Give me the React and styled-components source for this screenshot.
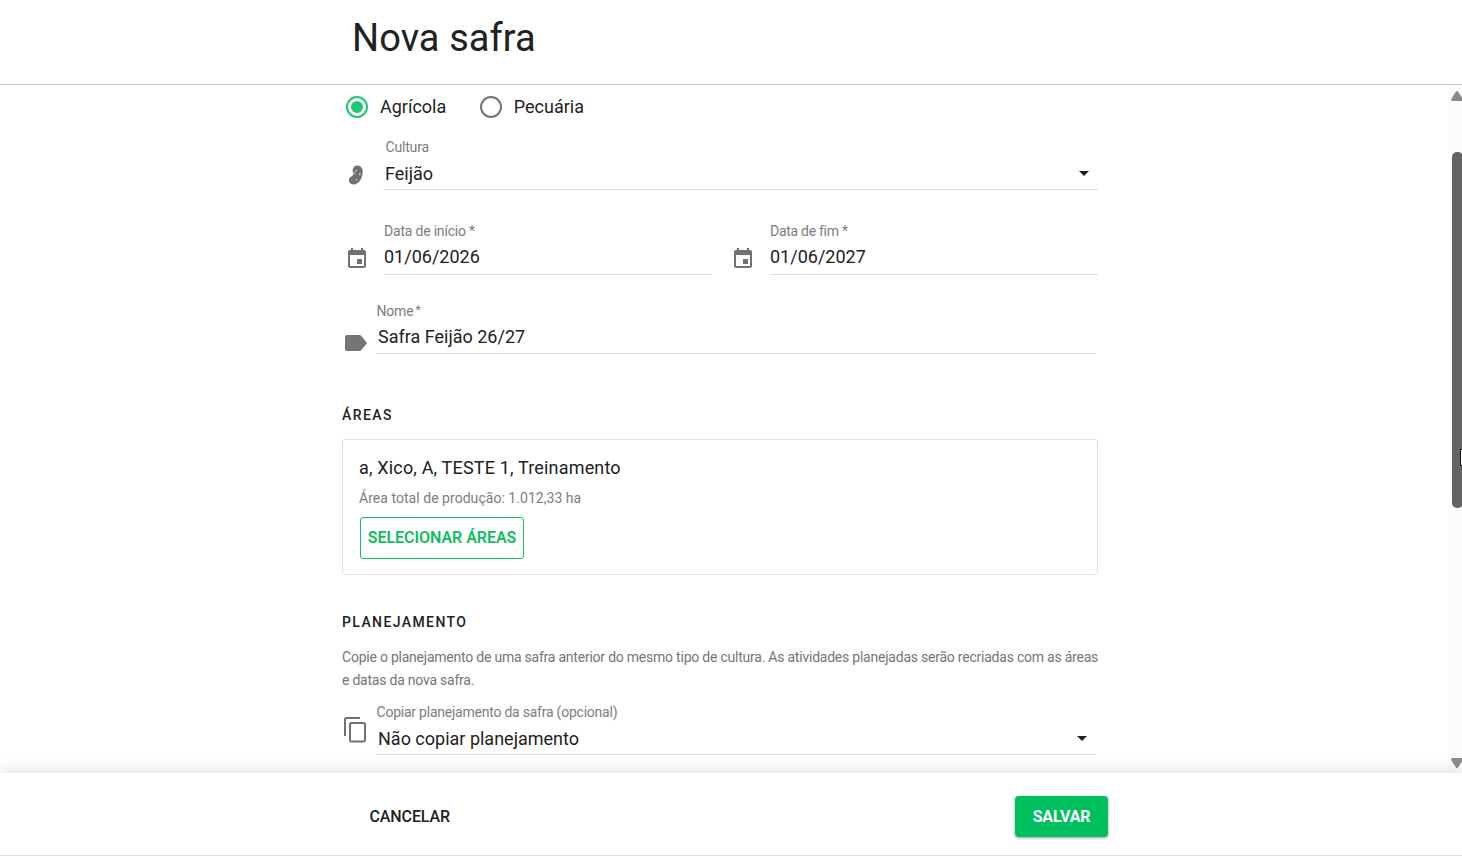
import React from "react";
import styled, { createGlobalStyle } from "styled-components";

const GlobalStyle = createGlobalStyle`
  *, *::before, *::after { box-sizing: border-box; }
  html, body { margin: 0; padding: 0; overflow: hidden; background: #fff; }
  body { font-family: Roboto, "Liberation Sans", sans-serif; color: #212121; }
  h1, h2, p { margin: 0; font-weight: 400; }
`;

const Page = styled.div`
  display: flex;
  flex-direction: column;
  width: 100vw;
  height: 100vh;
  overflow: hidden;
`;

const Header = styled.header`
  flex: none;
  height: 85px;
  padding: 14px 0 0 352px;
  border-bottom: 1px solid #c9c9c9;
`;

const Title = styled.h1`
  font-size: 38px;
  line-height: 48px;
  letter-spacing: 0.08px;
`;

const Body = styled.div`
  flex: 1;
  min-height: 0;
  display: flex;
  justify-content: space-between;
`;

const Form = styled.main`
  width: 756px;
  margin-left: 342px;
  display: flex;
  flex-direction: column;
`;

const RadioGroup = styled.div`
  display: flex;
  gap: 33.5px;
  height: 44px;
  margin-bottom: 10px;
  padding-left: 4px;
`;

const RadioOption = styled.label`
  display: flex;
  align-items: center;
  gap: 12px;
  font-size: 18px;
  svg { display: block; }
`;

const RadioText = styled.span`
  line-height: 22px;
`;

const FieldRow = styled.div`
  display: flex;
  align-items: flex-start;
  margin-top: ${(p) => p.$top || 0}px;
  padding-right: ${(p) => p.$right || 0}px;
`;

const FieldIcon = styled.span`
  flex: none;
  display: block;
  width: ${(p) => p.$width}px;
  padding-top: ${(p) => p.$top}px;
  padding-left: ${(p) => p.$left || 0}px;
  svg { display: block; }
`;

const FieldBox = styled.div`
  flex: 1;
  height: ${(p) => p.$height || 51}px;
  border-bottom: 1px solid #dedede;
`;

const FieldLabel = styled.div`
  padding-left: ${(p) => p.$pad || 0}px;
  font-size: 14px;
  line-height: 16px;
  letter-spacing: ${(p) => p.$spacing || "-0.2px"};
  color: #7d7d7d;
`;

const FieldValue = styled.div`
  display: flex;
  justify-content: space-between;
  margin-top: ${(p) => p.$top || 6}px;
  padding-left: ${(p) => p.$pad || 0}px;
  padding-right: 9px;
  font-size: 18px;
  line-height: 24px;
`;

const Caret = styled.i`
  align-self: center;
  margin-bottom: 2px;
  border: 5px solid transparent;
  border-top-color: #212121;
  border-bottom-width: 0;
`;

const Asterisk = styled.span`
  margin-left: 2px;
  font-size: 12px;
  line-height: 0;
  vertical-align: 2px;
`;

const SectionTitle = styled.h2`
  margin-top: ${(p) => p.$top}px;
  font-size: 14px;
  font-weight: 500;
  line-height: 20px;
  letter-spacing: 1.4px;
`;

const AreasCard = styled.section`
  height: 136px;
  margin-top: 14px;
  padding: 15px 16px;
  border: 1px solid #e2e2e2;
  border-radius: 3px;
`;

const AreaNames = styled.p`
  font-size: 18px;
  line-height: 26px;
  letter-spacing: 0.17px;
`;

const AreaTotal = styled.p`
  margin: 7px 0 9px;
  font-size: 14px;
  line-height: 20px;
  letter-spacing: 0.04px;
  color: #7d7d7d;
`;

const OutlineButton = styled.button`
  display: block;
  width: 164px;
  height: 42px;
  margin-left: 1px;
  padding: 0 0 2px;
  border: 1px solid #0fbd62;
  border-radius: 3px;
  background: #fff;
  color: #0fbd62;
  font: 600 16px Roboto, sans-serif;
  letter-spacing: -0.03px;
  white-space: nowrap;
`;

const Hint = styled.p`
  margin-top: 14px;
  font-size: 14px;
  line-height: 23px;
  letter-spacing: -0.227px;
  color: #757575;
  white-space: nowrap;
`;

const ScrollTrack = styled.div`
  width: 14px;
  padding: 6px 0 5px 2px;
  display: flex;
  flex-direction: column;
  overflow: hidden;
  background: #fcfcfc;
  svg { display: block; flex: none; }
`;

const ScrollThumb = styled.div`
  position: relative;
  flex: none;
  width: 11px;
  height: 356px;
  margin: 51px 0 auto 2px;
  border-radius: 5px;
  background: #636363;
`;

const DragPointer = styled.div`
  position: absolute;
  left: 8px;
  top: 297px;
  width: 6px;
  height: 17px;
  border: 1px solid #111;
  background: #fff;
`;

const Footer = styled.footer`
  position: relative;
  flex: none;
  display: flex;
  align-items: flex-start;
  justify-content: space-between;
  height: 83px;
  padding: 23px 354px 0 360px;
  border-bottom: 1px solid #dcdcdc;
  background: #fff;
  box-shadow: 0 -2px 14px rgba(0, 0, 0, 0.13);
`;

const FooterButton = styled.button`
  height: ${(p) => (p.$primary ? 41 : 42)}px;
  width: ${(p) => p.$width}px;
  padding: 0 0 ${(p) => (p.$primary ? 1 : 2)}px;
  border: 0;
  border-radius: 4px;
  font: ${(p) => (p.$primary ? 700 : 500)} 16px Roboto, sans-serif;
  letter-spacing: ${(p) => p.$spacing};
  color: ${(p) => (p.$primary ? "#fff" : "#212121")};
  background: ${(p) => (p.$primary ? "#00bf5f" : "transparent")};
  box-shadow: ${(p) => (p.$primary ? "0 1px 3px rgba(0, 0, 0, 0.4)" : "none")};
`;

const RadioIcon = ({ checked }) => (
  <svg width="22" height="22" viewBox="0 0 22 22" fill="none">
    <circle cx="11" cy="11" r="10" stroke={checked ? "#22c572" : "#747474"} strokeWidth="2" />
    {checked && <circle cx="11" cy="11" r="6" fill="#22c572" />}
  </svg>
);

const BeanIcon = () => (
  <svg width="16" height="20" viewBox="0 0 16 20">
    <path
      d="M8.6.5C11.9 0 14.500 2.300 14.700 6c.2 5.700-2.400 11.900-7.600 13.200C3.800 20 .9 18.300.9 15.300c0-2 1-3 2.400-3.800 1.700-1 2.300-1.800 1.800-3.300C4.200 5.200 4.700 1.200 8.600.5Z"
      fill="#717171"
    />
    <path
      d="M8.300 5.400 7.300 6.100M11.800 8.600v1.200M8.600 14.800l.3-.4M4.600 9.600 3.500 10.500M6.200 7.600v.8"
      stroke="#fff"
      strokeWidth="1.100"
      strokeLinecap="round"
      opacity=".75"
    />
  </svg>
);

const CalendarIcon = () => (
  <svg width="24" height="24" viewBox="0 0 24 24" fill="#717171">
    <path d="M17 12h-5v5h5v-5zM16 1v2H8V1H6v2H5c-1.110 0-1.990.9-1.990 2L3 19c0 1.100.89 2 2 2h14c1.100 0 2-.9 2-2V5c0-1.100-.9-2-2-2h-1V1h-2zm3 18H5V8h14v11z" />
  </svg>
);

const LabelIcon = () => (
  <svg width="22" height="16" viewBox="0 0 22 16" fill="#757575">
    <path d="M2 0h12.500c.8 0 1.400.3 1.900.9L22 8l-5.600 7.100c-.5.600-1.100.9-1.900.9H2c-1.100 0-2-.9-2-2V2C0 .9.900 0 2 0Z" />
  </svg>
);

const CopyIcon = () => (
  <svg width="22" height="26" viewBox="0 0 22 26" fill="none" stroke="#717171" strokeWidth="2">
    <path d="M1 19V2.500C1 1.700 1.700 1 2.500 1H16" />
    <rect x="6" y="6" width="15" height="18.500" rx="1.200" />
  </svg>
);

const ScrollArrow = ({ down }) => (
  <svg width="14" height="10" viewBox="0 0 14 10" fill="#8a8a8a">
    <path
      d="M6 .6q1-1 2 0l4.500 6.900q.8 2.300-1 2.500H2.500Q.5 9.500 1.500 7.500Z"
      transform={down ? "matrix(1 0 0 -1 0 10)" : undefined}
    />
  </svg>
);

export default function App() {
  return (
    <>
      <GlobalStyle />
      <Page>
        <Header>
          <Title>Nova safra</Title>
        </Header>
        <Body>
          <Form>
            <RadioGroup>
              <RadioOption>
                <RadioIcon checked />
                <RadioText>Agrícola</RadioText>
              </RadioOption>
              <RadioOption>
                <RadioIcon />
                <RadioText>Pecuária</RadioText>
              </RadioOption>
            </RadioGroup>

            <FieldRow>
              <FieldIcon $width={41} $top={26} $left={6}><BeanIcon /></FieldIcon>
              <FieldBox>
                <FieldLabel $pad={2.6}>Cultura</FieldLabel>
                <FieldValue $pad={2} $top={7}>Feijão<Caret /></FieldValue>
              </FieldBox>
            </FieldRow>

            <FieldRow $top={33}>
              <FieldIcon $width={42} $top={24} $left={3}><CalendarIcon /></FieldIcon>
              <FieldBox $height={52}>
                <FieldLabel>Data de início *</FieldLabel>
                <FieldValue>01/06/2026</FieldValue>
              </FieldBox>
              <FieldIcon $width={58} $top={24} $left={19}><CalendarIcon /></FieldIcon>
              <FieldBox $height={52}>
                <FieldLabel $spacing="-0.28px">Data de fim *</FieldLabel>
                <FieldValue>01/06/2027</FieldValue>
              </FieldBox>
            </FieldRow>

            <FieldRow $top={28} $right={2}>
              <FieldIcon $width={34} $top={32} $left={3}><LabelIcon /></FieldIcon>
              <FieldBox>
                <FieldLabel $pad={0.5}>Nome<Asterisk>*</Asterisk></FieldLabel>
                <FieldValue $pad={2}>Safra Feijão 26/27</FieldValue>
              </FieldBox>
            </FieldRow>

            <SectionTitle $top={51}>ÁREAS</SectionTitle>
            <AreasCard>
              <AreaNames>a, Xico, A, TESTE 1, Treinamento</AreaNames>
              <AreaTotal>Área total de produção: 1.012,33 ha</AreaTotal>
              <OutlineButton>SELECIONAR ÁREAS</OutlineButton>
            </AreasCard>

            <SectionTitle $top={37}>PLANEJAMENTO</SectionTitle>
            <Hint>
              Copie o planejamento de uma safra anterior do mesmo tipo de cultura. As atividades planejadas serão recriadas com as áreas
              <br />
              e datas da nova safra.
            </Hint>
            <FieldRow $top={12} $right={2}>
              <FieldIcon $width={34} $top={13} $left={2}><CopyIcon /></FieldIcon>
              <FieldBox>
                <FieldLabel $pad={0.5} $spacing="-0.23px">Copiar planejamento da safra (opcional)</FieldLabel>
                <FieldValue $pad={2} $top={7}>Não copiar planejamento<Caret /></FieldValue>
              </FieldBox>
            </FieldRow>
          </Form>
          <ScrollTrack>
            <ScrollArrow />
            <ScrollThumb>
              <DragPointer />
            </ScrollThumb>
            <ScrollArrow down />
          </ScrollTrack>
        </Body>
        <Footer>
          <FooterButton $width={99.500} $spacing="-0.1px">CANCELAR</FooterButton>
          <FooterButton $primary $width={93} $spacing="-0.15px">SALVAR</FooterButton>
        </Footer>
      </Page>
    </>
  );
}
